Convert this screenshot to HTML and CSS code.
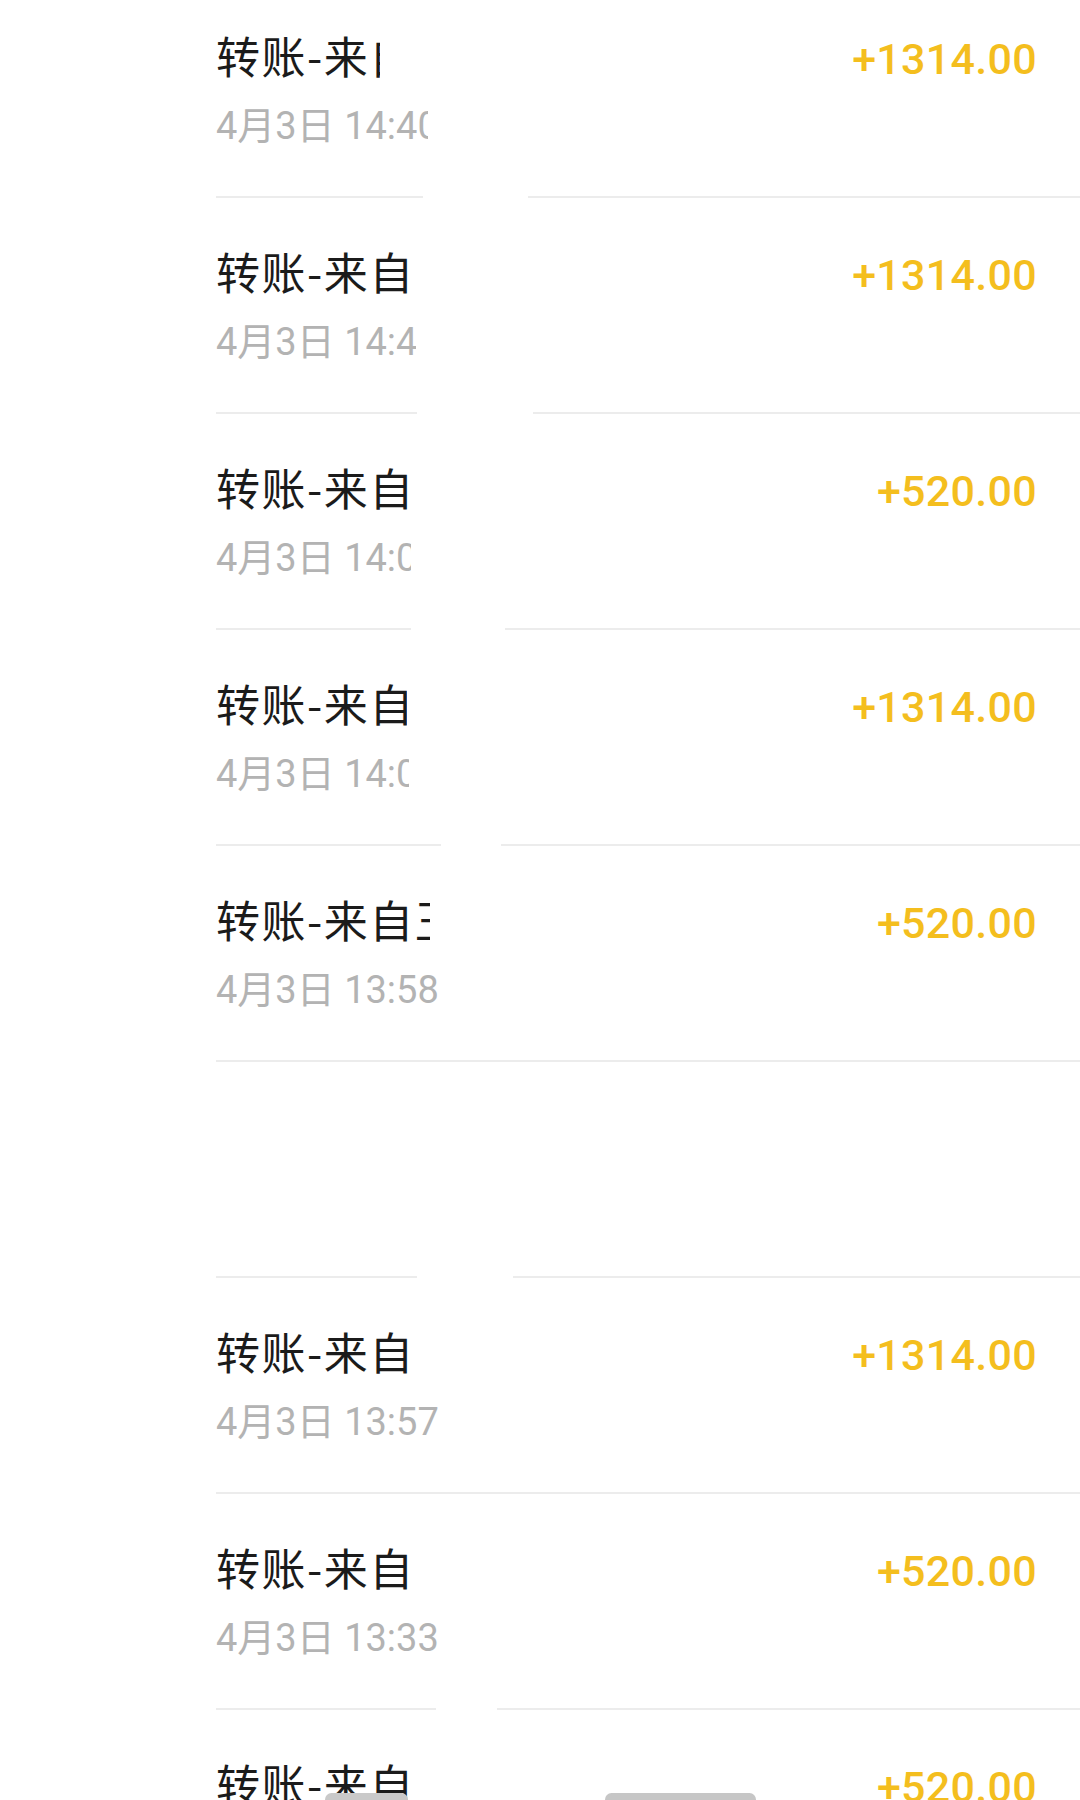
FILE: index.html
```html
<!DOCTYPE html>
<html lang="zh-CN">
<head>
    <meta charset="UTF-8">
    <meta name="viewport" content="width=device-width, initial-scale=1.0">
    <title>账单</title>
    <link rel="stylesheet" href="styles.css">
</head>
<body>
    <div class="list">
        <div class="row">
            <div class="info">
                <span class="title">转账-来自王小明</span>
                <span class="time">4月3日 14:40</span>
            </div>
            <span class="amount">+1314.00</span>
        </div>
        <div class="row">
            <div class="info">
                <span class="title">转账-来自王小明</span>
                <span class="time">4月3日 14:42</span>
            </div>
            <span class="amount">+1314.00</span>
        </div>
        <div class="row">
            <div class="info">
                <span class="title">转账-来自王小明</span>
                <span class="time">4月3日 14:06</span>
            </div>
            <span class="amount">+520.00</span>
        </div>
        <div class="row">
            <div class="info">
                <span class="title">转账-来自王小明</span>
                <span class="time">4月3日 14:02</span>
            </div>
            <span class="amount">+1314.00</span>
        </div>
        <div class="row">
            <div class="info">
                <span class="title">转账-来自王小明</span>
                <span class="time">4月3日 13:58</span>
            </div>
            <span class="amount">+520.00</span>
        </div>
        <div class="row row-empty"></div>
        <div class="row">
            <div class="info">
                <span class="title">转账-来自王小明</span>
                <span class="time">4月3日 13:57</span>
            </div>
            <span class="amount">+1314.00</span>
        </div>
        <div class="row">
            <div class="info">
                <span class="title">转账-来自王小明</span>
                <span class="time">4月3日 13:33</span>
            </div>
            <span class="amount">+520.00</span>
        </div>
        <div class="row">
            <div class="info">
                <span class="title">转账-来自王小明</span>
                <span class="time">4月3日 13:20</span>
            </div>
            <span class="amount">+520.00</span>
        </div>
    </div>

    <div class="nav-mark"></div>
    <div class="nav-pill"></div>
</body>
</html>
```

FILE: styles.css
```css
body {
    margin: 0;
    background: #fff;
    font-family: Roboto, "Noto Sans CJK SC", sans-serif;
    overflow: hidden;
}

/* list is scrolled a little, first row is cut at the top */
.list {
    margin-top: -18px;
}

.row {
    position: relative;
    margin-left: 216px;
    padding-right: 43px;
    height: 214px;
    border-bottom: 2px solid #ececec;
    display: flex;
    justify-content: space-between;
    align-items: baseline;
}

/* white patches over the divider */
.row::after {
    content: "";
    position: absolute;
    bottom: -2px;
    left: var(--gap-left, 0);
    width: var(--gap-width, 0);
    height: 2px;
    background: #fff;
}

.info {
    display: flex;
    flex-direction: column;
    padding-top: 45px;
}

.title {
    display: inline-block;
    overflow: hidden;
    white-space: nowrap;
    font-family: "Noto Sans CJK SC", sans-serif;
    font-size: 44px;
    line-height: 56px;
    letter-spacing: 1.5px;
    color: #1b1b1b;
    max-width: 195px;
}

.time {
    display: inline-block;
    overflow: hidden;
    white-space: nowrap;
    margin-top: 21px;
    font-size: 38px;
    line-height: 44px;
    color: #b3b3b3;
    max-width: 230px;
}

.amount {
    font-size: 43px;
    font-weight: 500;
    letter-spacing: 0.3px;
    color: #f4be1e;
}

/* per-row cut of the hidden names */
.row:nth-child(1) .title { max-width: 164px; }
.row:nth-child(1) .time { max-width: 212px; }
.row:nth-child(1) { --gap-left: 207px; --gap-width: 105px; }

.row:nth-child(2) .title { max-width: 197px; }
.row:nth-child(2) .time { max-width: 200px; }
.row:nth-child(2) { --gap-left: 201px; --gap-width: 116px; }

.row:nth-child(3) .title { max-width: 198px; }
.row:nth-child(3) .time { max-width: 195px; }
.row:nth-child(3) { --gap-left: 195px; --gap-width: 94px; }

.row:nth-child(4) .title { max-width: 191px; }
.row:nth-child(4) .time { max-width: 193px; }
.row:nth-child(4) { --gap-left: 225px; --gap-width: 60px; }

.row:nth-child(5) .title { max-width: 214px; }

.row:nth-child(6) { --gap-left: 201px; --gap-width: 96px; }

.row:nth-child(8) { --gap-left: 220px; --gap-width: 61px; }

.nav-pill {
    position: fixed;
    left: 605px;
    bottom: -6px;
    width: 151px;
    height: 13px;
    border-radius: 7px;
    background: #c6c6c6;
}

.nav-mark {
    position: fixed;
    left: 325px;
    bottom: -6px;
    width: 83px;
    height: 13px;
    border-radius: 7px;
    background: #c9c9c9;
}
```
